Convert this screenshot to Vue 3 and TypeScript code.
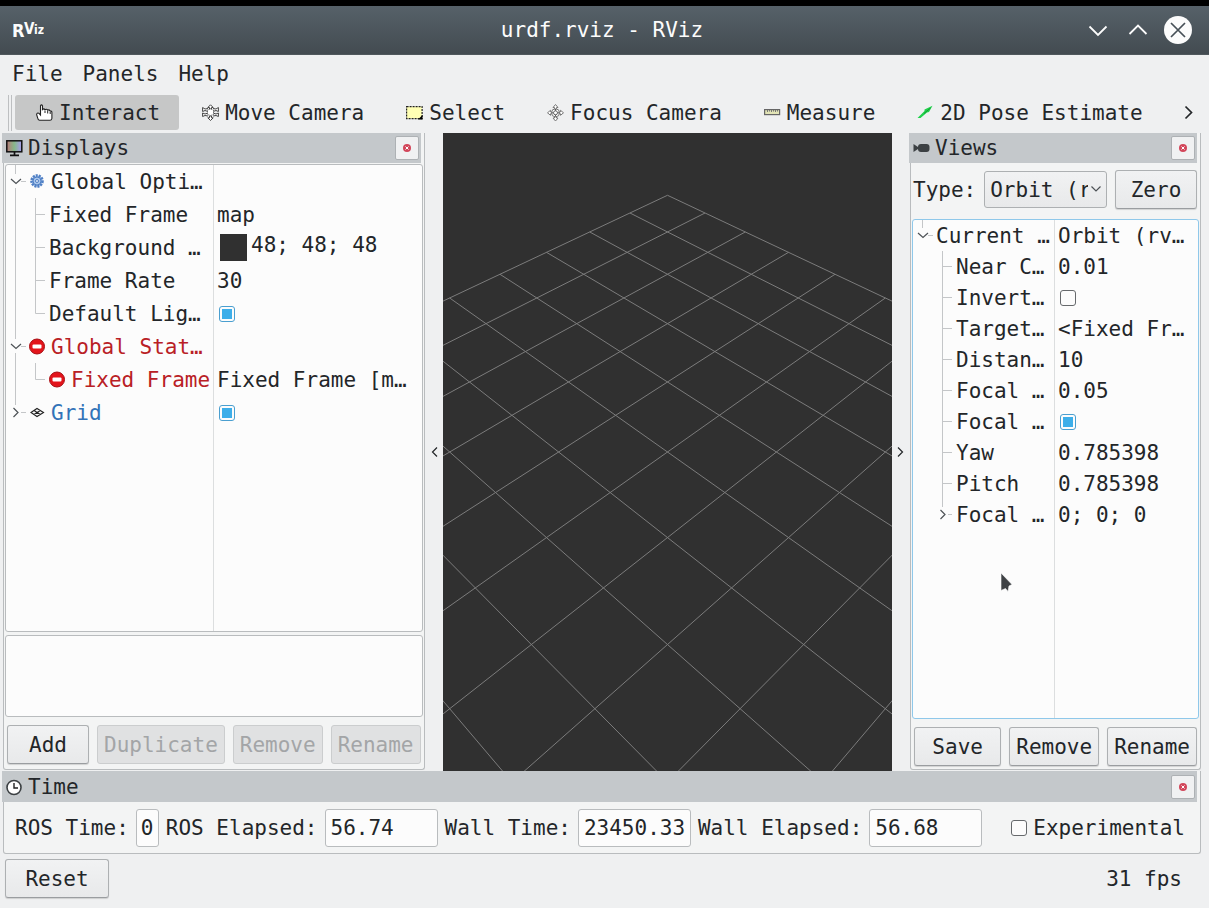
<script setup lang="ts">
import { ref } from 'vue'

interface TreeRow {
  name: string
  value?: string
  check?: boolean
  swatch?: boolean
  icon?: 'gear' | 'stop' | 'grid'
  tone?: 'error' | 'link'
  depth: 0 | 1
  toggle?: 'open' | 'closed'
  /* vertical guide lines: path data inside the branch gutter */
  guides: string
}

const tools = [
  { id: 'interact', label: 'Interact' },
  { id: 'move', label: 'Move Camera' },
  { id: 'select', label: 'Select' },
  { id: 'focus', label: 'Focus Camera' },
  { id: 'measure', label: 'Measure' },
  { id: 'pose', label: '2D Pose Estimate' },
]
const activeTool = ref('interact')

const mid = 'M9.5 0V33M29.5 0V33M29.5 16.5H39'
const displays = ref<TreeRow[]>([
  { name: 'Global Opti…', icon: 'gear', depth: 0, toggle: 'open', guides: 'M9.5 0V9M9.5 23V33M15 16.5H20' },
  { name: 'Fixed Frame', value: 'map', depth: 1, guides: mid },
  { name: 'Background …', value: '48; 48; 48', swatch: true, depth: 1, guides: mid },
  { name: 'Frame Rate', value: '30', depth: 1, guides: mid },
  { name: 'Default Lig…', check: true, depth: 1, guides: 'M9.5 0V33M29.5 0V16.5H39' },
  { name: 'Global Stat…', icon: 'stop', tone: 'error', depth: 0, toggle: 'open', guides: 'M9.5 0V9M9.5 23V33M15 16.5H20' },
  { name: 'Fixed Frame', value: 'Fixed Frame [m…', icon: 'stop', tone: 'error', depth: 1, guides: 'M9.5 0V33M29.5 0V16.5H39' },
  { name: 'Grid', check: true, icon: 'grid', tone: 'link', depth: 0, toggle: 'closed', guides: 'M9.5 0V9M15 16.5H20' },
])

const midView = 'M29.5 0V31M29.5 15.5H39'
const views = ref<TreeRow[]>([
  { name: 'Current …', value: 'Orbit (rv…', depth: 0, toggle: 'open', guides: 'M9.5 0V8M15 15.5H20' },
  { name: 'Near C…', value: '0.01', depth: 1, guides: midView },
  { name: 'Invert…', check: false, depth: 1, guides: midView },
  { name: 'Target…', value: '<Fixed Fr…', depth: 1, guides: midView },
  { name: 'Distan…', value: '10', depth: 1, guides: midView },
  { name: 'Focal …', value: '0.05', depth: 1, guides: midView },
  { name: 'Focal …', check: true, depth: 1, guides: midView },
  { name: 'Yaw', value: '0.785398', depth: 1, guides: midView },
  { name: 'Pitch', value: '0.785398', depth: 1, guides: midView },
  { name: 'Focal …', value: '0; 0; 0', depth: 1, toggle: 'closed', guides: 'M29.5 0V8M35 15.5H39' },
])

const trees = { displays, views }
type TreeName = keyof typeof trees

/* Orbit camera: yaw and pitch of 45 degrees, distance 10, 45 degree field of view */
const focal = 319 / Math.tan(Math.PI / 8)
function project(x: number, y: number): string {
  const right = (x - y) / Math.SQRT2
  const near = (x + y) / 2
  const depth = 10 - near
  return `${((focal * right) / depth).toFixed(2)} ${((focal * near) / depth).toFixed(2)}`
}
const gridPath = Array.from({ length: 11 }, (_, k) => k - 5)
  .map((k) => `M${project(k, -5)}L${project(k, 5)}M${project(-5, k)}L${project(5, k)}`)
  .join('')

const times = [
  { id: 'ros-time', label: 'ROS Time:', value: '0', small: true },
  { id: 'ros-elapsed', label: 'ROS Elapsed:', value: '56.74', small: false },
  { id: 'wall-time', label: 'Wall Time:', value: '23450.33', small: false },
  { id: 'wall-elapsed', label: 'Wall Elapsed:', value: '56.68', small: false },
]
const experimental = ref(false)

function gutter(row: TreeRow): number {
  return row.depth === 0 ? 21 : 41
}
function rowsOf(name: string): TreeRow[] {
  return trees[name as TreeName].value
}
</script>

<template>
  <div class="window">
    <header class="titlebar">
      <svg class="logo" width="32" height="24" viewBox="0 0 32 24" role="img" aria-label="RViz">
        <g class="logo-text">
          <text x="0" y="19" font-size="18">R</text>
          <text x="12" y="16" font-size="15">V</text>
          <text x="22" y="16" font-size="12">iz</text>
        </g>
      </svg>
      <h1 class="title">urdf.rviz - RViz</h1>
      <div class="window-buttons">
        <button type="button" aria-label="Minimize">
          <svg width="28" height="28" viewBox="0 0 28 28"><path d="M5.5 10.5L14 19L22.500 10.500" fill="none" stroke="#fcfcfc" stroke-width="1.8" /></svg>
        </button>
        <button type="button" aria-label="Maximize">
          <svg width="28" height="28" viewBox="0 0 28 28"><path d="M5.500 18L14 9.500L22.500 18" fill="none" stroke="#fcfcfc" stroke-width="1.8" /></svg>
        </button>
        <button type="button" aria-label="Close">
          <svg width="28" height="28" viewBox="0 0 28 28">
            <circle cx="14" cy="14" r="14" fill="#fcfcfc" />
            <path d="M7 7L21 21M21 7L7 21" stroke="#475057" stroke-width="1.7" />
          </svg>
        </button>
      </div>
    </header>

    <nav class="menubar" aria-label="Menu">
      <button type="button">File</button>
      <button type="button">Panels</button>
      <button type="button">Help</button>
    </nav>

    <div class="toolbar" role="toolbar" aria-label="Tools">
      <span class="handle"></span>
      <button
        v-for="tool in tools"
        :key="tool.id"
        type="button"
        class="tool"
        :class="{ active: tool.id === activeTool }"
        @click="activeTool = tool.id"
      >
        <svg width="17" height="18" viewBox="0 0 17 18" aria-hidden="true">
          <g v-if="tool.id === 'interact'">
            <path d="M4.500 10V1.800Q5.500 0 6.500 1.800V5.500Q7.800 4.200 9 5.700Q10.300 4.500 11.700 6.200Q13 5.300 14.200 7Q15.900 6.700 15.900 8.500V14.500Q15.500 16.300 14 16.300H3.500Q2 16 1.700 14L0.600 10.500Q0.900 8.600 2.800 9.200L4.500 11Z" fill="#fff" stroke="#222" stroke-width="1.100" />
            <path d="M9 6.500V9M11.700 7V9.500M14.200 7.500V10" stroke="#222" stroke-width="1" />
          </g>
          <g v-else-if="tool.id === 'move'" fill="#fff" stroke="#444" stroke-width="1">
            <path d="M8.500 0.800L11.200 3.500H9.500V5H7.500V3.500H5.800ZM8.500 16.500L11.200 13.800H9.500V12H7.500V13.800H5.800Z" />
            <path d="M0.600 3.500V7.500L3 6.500L6 7.500M0.600 3.500L3 5L6 4.500M0.600 12.500V9L3 10L6 9M0.600 12.500L3 11.500L6 12M16.400 3.500V7.500L14 6.500L11 7.500M16.400 3.500L14 5L11 4.500M16.400 12.500V9L14 10L11 9M16.400 12.500L14 11.500L11 12" />
            <path d="M5.500 6L8.500 5L11.500 6V10.500L8.500 11.500L5.500 10.500Z" stroke-dasharray="1 1" />
          </g>
          <g v-else-if="tool.id === 'select'">
            <rect x="0.600" y="2.600" width="15.500" height="12" fill="#ffffb4" stroke="#222" stroke-width="1.200" stroke-dasharray="2 1" />
            <path d="M16.500 11V15.500H12Z" fill="#000" />
          </g>
          <g v-else-if="tool.id === 'focus'" fill="#fff" stroke="#777" stroke-width="1">
            <path d="M8.500 0.500L11 3.500H9.500V5.500H7.500V3.500H6ZM8.500 17L11 14H9.500V12H7.500V14H6ZM0.500 8.800L3.500 6.300V7.800H5.500V9.800H3.500V11.300ZM16.500 8.800L13.500 6.300V7.800H11.500V9.800H13.500V11.300Z" />
            <circle cx="8.500" cy="8.800" r="4" />
            <path d="M8.500 5V12.500M4.500 8.800H12.500" stroke="#555" />
            <circle cx="8.500" cy="8.800" r="2" stroke="#666" />
          </g>
          <g v-else-if="tool.id === 'measure'">
            <rect x="0.600" y="5.600" width="15" height="5" fill="#e2e4b6" stroke="#666" stroke-width="1.200" />
            <path d="M3.500 6V8M5.500 6V7.500M7.500 6V8M9.500 6V7.500M11.500 6V8M13.500 6V7.500" stroke="#777" stroke-width="1" />
          </g>
          <g v-else>
            <path d="M0.500 14L7.500 7L7.500 5.500L15.500 1.800L12 8L10 8.500L3.500 14Z" fill="#1fd24b" />
            <path d="M7 9.500L13.500 4" stroke="#159a33" stroke-width="1" />
          </g>
        </svg>
        <span>{{ tool.label }}</span>
      </button>
      <button type="button" class="more" aria-label="More tools">
        <svg width="10" height="16" viewBox="0 0 10 16"><path d="M1.500 1.500L7.500 7.500L1.500 13.500" fill="none" stroke="#232629" stroke-width="1.700" /></svg>
      </button>
    </div>

    <main class="workspace">
      <section class="dock" aria-label="Displays">
        <header class="dock-title">
          <svg width="17" height="18" viewBox="0 0 17 18" aria-hidden="true">
            <defs>
              <linearGradient id="screen" x1="0" x2="1" y1="0" y2="0">
                <stop offset="0" stop-color="#b87878" />
                <stop offset="0.500" stop-color="#86b889" />
                <stop offset="1" stop-color="#a99cf0" />
              </linearGradient>
            </defs>
            <rect x="0.800" y="1.800" width="15" height="11" fill="url(#screen)" stroke="#111" stroke-width="1.500" />
            <path d="M8.500 13V16M4 16.300H13" stroke="#111" stroke-width="1.700" />
          </svg>
          <h2>Displays</h2>
          <button type="button" class="dock-close" aria-label="Close Displays">
            <svg width="8" height="8" viewBox="0 0 8 8"><circle cx="4" cy="4" r="4" fill="#d2465a" /><path d="M2.500 2.500L5.500 5.500M5.500 2.500L2.500 5.500" stroke="#fff" stroke-width="1" /></svg>
          </button>
        </header>
        <div class="dock-body displays-body">
          <div class="tree displays-tree">
            <table aria-label="Display properties">
              <tbody>
                <tr v-for="(row, i) in rowsOf('displays')" :key="i">
                  <td class="name-cell">
                    <div class="name" :class="row.tone">
                      <component :is="row.toggle ? 'button' : 'span'" class="branch" :aria-label="row.toggle ? 'Toggle ' + row.name : undefined">
                        <svg :width="gutter(row)" height="33" aria-hidden="true">
                          <path :d="row.guides" class="guide" />
                          <path v-if="row.toggle === 'open'" d="M5 14L10 18.500L15 14" class="arrow" />
                          <path v-if="row.toggle === 'closed'" d="M7.500 12L12 16.500L7.500 21" class="arrow" />
                        </svg>
                      </component>
                      <svg v-if="row.icon" class="row-icon" width="18" height="18" viewBox="0 0 18 18" aria-hidden="true">
                        <g v-if="row.icon === 'gear'">
                          <circle cx="9" cy="8" r="5.500" fill="#9dbce6" stroke="#4f7fc4" stroke-width="2.600" stroke-dasharray="2 1" />
                          <circle cx="9" cy="8" r="4" fill="#a9c6ec" stroke="#4f7fc4" stroke-width="1" />
                          <circle cx="9" cy="8" r="1.500" fill="#e6effa" stroke="#4f7fc4" stroke-width="1" />
                        </g>
                        <g v-else-if="row.icon === 'stop'">
                          <circle cx="9" cy="8.500" r="7.500" fill="#e3141b" stroke="#a80d12" stroke-width="1" />
                          <rect x="4.500" y="6.500" width="9" height="4" rx="1" fill="#fff" />
                        </g>
                        <g v-else fill="none" stroke="#222" stroke-width="1.100">
                          <path d="M3 8.500L9 4.500L15.500 8.500L9 12.500ZM6 6.500L12.300 10.500M12.300 6.500L6 10.500" />
                        </g>
                      </svg>
                      <span>{{ row.name }}</span>
                    </div>
                  </td>
                  <td>
                    <div class="value">
                      <input v-if="row.check !== undefined" v-model="row.check" type="checkbox" :aria-label="row.name" />
                      <template v-else>
                        <i v-if="row.swatch" class="swatch"></i>
                        <span :class="{ 'swatch-text': row.swatch }">{{ row.value }}</span>
                      </template>
                    </div>
                  </td>
                </tr>
              </tbody>
            </table>
          </div>
          <div class="description" role="note"></div>
          <div class="button-row">
            <button type="button" class="push wide">Add</button>
            <button type="button" class="push" disabled>Duplicate</button>
            <button type="button" class="push" disabled>Remove</button>
            <button type="button" class="push" disabled>Rename</button>
          </div>
        </div>
      </section>

      <div class="splitter">
        <button type="button" aria-label="Collapse left panel">
          <svg width="8" height="12" viewBox="0 0 8 12"><path d="M7 1.500L2.500 6L7 10.500" class="arrow dark" /></svg>
        </button>
      </div>

      <div class="viewport">
        <svg class="scene" viewBox="-224.500 -319 449 638" preserveAspectRatio="xMidYMid slice" role="img" aria-label="3D grid">
          <path :d="gridPath" fill="none" stroke="#7c7c7c" stroke-width="1" />
        </svg>
      </div>

      <div class="splitter">
        <button type="button" aria-label="Collapse right panel">
          <svg width="8" height="12" viewBox="0 0 8 12"><path d="M1 1.500L5.500 6L1 10.500" class="arrow dark" /></svg>
        </button>
      </div>

      <section class="dock" aria-label="Views">
        <header class="dock-title">
          <svg width="17" height="18" viewBox="0 0 17 18" aria-hidden="true">
            <path d="M0.500 5V13L5 10V8Z" fill="#3c4043" />
            <rect x="5" y="5" width="11.500" height="8" rx="3" fill="#3c4043" />
            <path d="M4 9H7" stroke="#3c4043" stroke-width="2" />
          </svg>
          <h2>Views</h2>
          <button type="button" class="dock-close" aria-label="Close Views">
            <svg width="8" height="8" viewBox="0 0 8 8"><circle cx="4" cy="4" r="4" fill="#d2465a" /><path d="M2.500 2.500L5.500 5.500M5.500 2.500L2.500 5.500" stroke="#fff" stroke-width="1" /></svg>
          </button>
        </header>
        <div class="dock-body">
          <div class="type-row">
            <label for="view-type">Type:</label>
            <div class="combo">
              <select id="view-type">
                <option>Orbit (rviz)</option>
              </select>
              <svg class="combo-arrow" width="12" height="8" viewBox="0 0 12 8" aria-hidden="true"><path d="M1.500 1.500L6 6L10.500 1.500" class="arrow" /></svg>
            </div>
            <button type="button" class="push wide">Zero</button>
          </div>
          <div class="tree views-tree">
            <table aria-label="View properties">
              <tbody>
                <tr v-for="(row, i) in rowsOf('views')" :key="i">
                  <td class="name-cell">
                    <div class="name">
                      <component :is="row.toggle ? 'button' : 'span'" class="branch" :aria-label="row.toggle ? 'Toggle ' + row.name : undefined">
                        <svg :width="gutter(row)" height="31" aria-hidden="true">
                          <path :d="row.guides" class="guide" />
                          <path v-if="row.toggle === 'open'" d="M5 13L10 17.500L15 13" class="arrow" />
                          <path v-if="row.toggle === 'closed'" d="M27.500 11L32 15.500L27.500 20" class="arrow" />
                        </svg>
                      </component>
                      <span>{{ row.name }}</span>
                    </div>
                  </td>
                  <td>
                    <div class="value">
                      <input v-if="row.check !== undefined" v-model="row.check" type="checkbox" :aria-label="row.name" />
                      <span v-else>{{ row.value }}</span>
                    </div>
                  </td>
                </tr>
              </tbody>
            </table>
            <svg class="cursor" width="14" height="24" viewBox="0 0 14 24" aria-hidden="true">
              <path d="M1 1L12 12.500L9 14L8 19.500L5.500 16.500L1 18.500Z" fill="#3f4245" stroke="#fff" stroke-width="0.600" />
            </svg>
          </div>
          <div class="button-row">
            <button type="button" class="push grow">Save</button>
            <button type="button" class="push">Remove</button>
            <button type="button" class="push">Rename</button>
          </div>
        </div>
      </section>
    </main>

    <section class="dock time-dock" aria-label="Time">
      <header class="dock-title">
        <svg width="17" height="18" viewBox="0 0 17 18" aria-hidden="true">
          <circle cx="8" cy="9.500" r="7" fill="#fff" stroke="#3c4043" stroke-width="1.600" />
          <path d="M8 5V10H12" fill="none" stroke="#222" stroke-width="1.400" />
        </svg>
        <h2>Time</h2>
        <button type="button" class="dock-close" aria-label="Close Time">
          <svg width="8" height="8" viewBox="0 0 8 8"><circle cx="4" cy="4" r="4" fill="#d2465a" /><path d="M2.500 2.500L5.500 5.500M5.500 2.500L2.500 5.500" stroke="#fff" stroke-width="1" /></svg>
        </button>
      </header>
      <div class="time-body">
        <template v-for="field in times" :key="field.id">
          <label :for="field.id">{{ field.label }}</label>
          <input :id="field.id" type="text" class="field" :class="{ small: field.small }" :value="field.value" readonly />
        </template>
        <label class="experimental" for="experimental">
          <input id="experimental" v-model="experimental" type="checkbox" />
          <span>Experimental</span>
        </label>
      </div>
    </section>

    <footer class="statusbar">
      <button type="button" class="push reset">Reset</button>
      <span>31 fps</span>
    </footer>
  </div>
</template>

<style>
body {
  margin: 0;
  background: #eff0f1;
}
</style>

<style scoped>
.window {
  box-sizing: border-box;
  display: flex;
  flex-direction: column;
  min-height: 100vh;
  border-top: 6px solid #000;
  background: #eff0f1;
  color: #232629;
  font-family: "DejaVu Sans Mono", monospace;
  font-size: 21px;
  line-height: 26px;
  white-space: pre;
}
.window *,
.window *::before {
  box-sizing: border-box;
}
button,
input,
select {
  margin: 0;
  padding: 0;
  border: 0;
  background: none;
  color: inherit;
  font: inherit;
}
svg {
  display: block;
  flex: none;
}
h1,
h2 {
  margin: 0;
  font-size: 21px;
  font-weight: 400;
}

.titlebar {
  display: grid;
  grid-template-columns: 1fr auto 1fr;
  align-items: center;
  height: 49px;
  padding: 0 17px 0 12px;
  background: linear-gradient(#566169, #434b51);
  border-bottom: 1px solid #50585d;
  color: #fcfcfc;
}
.logo-text {
  fill: #fcfcfc;
  font-family: "DejaVu Sans Condensed", "DejaVu Sans", sans-serif;
  font-weight: 700;
}
.window-buttons {
  display: flex;
  justify-content: flex-end;
  gap: 12px;
}

.menubar {
  display: flex;
  gap: 20px;
  height: 37px;
  padding: 0 12px;
}

.toolbar {
  display: flex;
  align-items: center;
  gap: 2px;
  height: 41px;
  padding: 0 15px 0 8px;
}
.handle {
  width: 4px;
  height: 36px;
  margin-right: 1px;
  border: solid #bdbfc1;
  border-width: 0 1px;
}
.tool {
  display: flex;
  align-items: center;
  gap: 6px;
  height: 35px;
  padding: 0 19px 0 21px;
  border-radius: 3px;
}
.tool.active {
  background: #c6c7c7;
}
.more {
  margin-left: auto;
}

.workspace {
  display: grid;
  grid-template-columns: 422px 18px minmax(0, 1fr) 18px 291px;
  flex: 1;
  padding: 0 8px 0 3px;
}
.dock {
  display: flex;
  flex-direction: column;
  min-height: 0;
  margin-bottom: 1px;
  border: solid #b9bcbe;
  border-width: 0 1px 1px;
  border-radius: 0 0 3px 3px;
  background: #f3f4f4;
}
.dock-title {
  display: flex;
  align-items: center;
  gap: 5px;
  height: 30px;
  margin: 0 3px 0 -2px;
  padding: 0 2px 0 4px;
  background: #c4c8cb;
}
.dock-close {
  display: grid;
  place-items: center;
  width: 24px;
  height: 24px;
  margin-left: auto;
  border: 1px solid #adb1b4;
  border-radius: 2px;
  background: #f0f1f2;
}
.dock-body {
  display: flex;
  flex-direction: column;
  flex: 1;
  padding: 0 1px 2px;
}
.displays-body {
  padding: 1px 1px 4px;
}

.tree {
  position: relative;
  flex: 1;
  border: 1px solid #b9bcbe;
  border-radius: 3px;
  background: linear-gradient(#dcdedf, #dcdedf) no-repeat #fcfcfc;
}
.displays-tree {
  background-position: 207px 0;
  background-size: 1px 100%;
}
.views-tree {
  border-color: #8fc8ea;
  background-position: 141px 0;
  background-size: 1px 100%;
}
table {
  width: 100%;
  border-collapse: collapse;
  table-layout: fixed;
}
td {
  padding: 0;
}
.displays-tree .name-cell {
  width: 208px;
}
.views-tree .name-cell {
  width: 142px;
}
.name,
.value {
  display: flex;
  align-items: center;
  height: 33px;
  overflow: hidden;
}
.views-tree .name,
.views-tree .value {
  height: 31px;
}
.name > span:last-child {
  padding-left: 2px;
}
.value {
  padding-left: 3px;
}
.branch {
  display: block;
  flex: none;
}
.guide {
  fill: none;
  stroke: #c4c6c8;
  stroke-width: 1;
}
.arrow {
  fill: none;
  stroke: #4d5256;
  stroke-width: 1.200;
}
.arrow.dark {
  stroke: #232629;
}
.row-icon {
  margin: 0 3px 0 1px;
}
.error {
  color: #b92025;
}
.link {
  color: #3273b8;
}
.swatch {
  flex: none;
  width: 27px;
  height: 27px;
  margin: 0 4px 0 3px;
  background: #303030;
}
.swatch-text {
  padding-bottom: 6px;
}

input[type="checkbox"] {
  appearance: none;
  flex: none;
  display: grid;
  place-items: center;
  width: 16px;
  height: 16px;
  margin: 0 2px;
  border: 1px solid #66696c;
  border-radius: 3px;
  background: #fcfcfc;
}
input[type="checkbox"]:checked {
  border-color: #4a9fd0;
}
input[type="checkbox"]:checked::before {
  content: "";
  width: 10px;
  height: 10px;
  background: #3daee9;
}

.description {
  height: 82px;
  margin-top: 3px;
  border: 1px solid #b9bcbe;
  border-radius: 3px;
  background: #fcfcfc;
}
.button-row {
  display: flex;
  gap: 8px;
  padding: 8px 2px 1px;
}
.push {
  height: 39px;
  padding: 0 6px;
  border: 1px solid #adb0b2;
  border-bottom-color: #9a9da0;
  border-radius: 3px;
  background: linear-gradient(#f1f2f3, #e8e9ea);
  box-shadow: 0 1px 1px rgba(0, 0, 0, 0.14);
}
.push:disabled {
  border-color: #cbcdce;
  background: #e0e1e2;
  box-shadow: none;
  color: #a3a5a7;
}
.wide {
  width: 82px;
}
.grow {
  flex: 1;
}

.splitter {
  display: grid;
  place-items: center;
}
.viewport {
  position: relative;
  overflow: hidden;
  background: #303030;
}
.scene {
  position: absolute;
  inset: 0;
  width: 100%;
  height: 100%;
}

.type-row {
  display: flex;
  align-items: center;
  gap: 8px;
  height: 56px;
  padding: 0 2px 3px 1px;
}
.combo {
  position: relative;
  flex: 1;
  min-width: 0;
}
.combo select {
  appearance: none;
  display: block;
  width: 100%;
  height: 37px;
  padding: 0 18px 0 5px;
  border: 1px solid #adb0b2;
  border-radius: 3px;
  background: linear-gradient(#f1f2f3, #e8e9ea);
}
.combo-arrow {
  position: absolute;
  top: 14px;
  right: 5px;
  pointer-events: none;
}
.cursor {
  position: absolute;
  top: 352px;
  left: 87px;
}

.time-dock {
  margin: 0 8px 0 3px;
}
.time-dock .dock-title {
  height: 31px;
  padding-top: 1px;
}
.time-body {
  display: flex;
  align-items: center;
  gap: 7px;
  padding: 7px 15px 6px 11px;
}
.field {
  flex: 1;
  min-width: 0;
  width: 0;
  height: 38px;
  padding: 0 3px 0 5px;
  border: 1px solid #b9bcbe;
  border-radius: 3px;
  background: #fcfcfc;
}
.field.small {
  flex: none;
  width: 23px;
  padding: 0 4px;
}
.experimental {
  display: flex;
  align-items: center;
  gap: 4px;
  margin-left: 20px;
}

.statusbar {
  display: flex;
  align-items: center;
  justify-content: space-between;
  height: 54px;
  padding: 0 27px 5px 5px;
}
.reset {
  width: 104px;
}
</style>
